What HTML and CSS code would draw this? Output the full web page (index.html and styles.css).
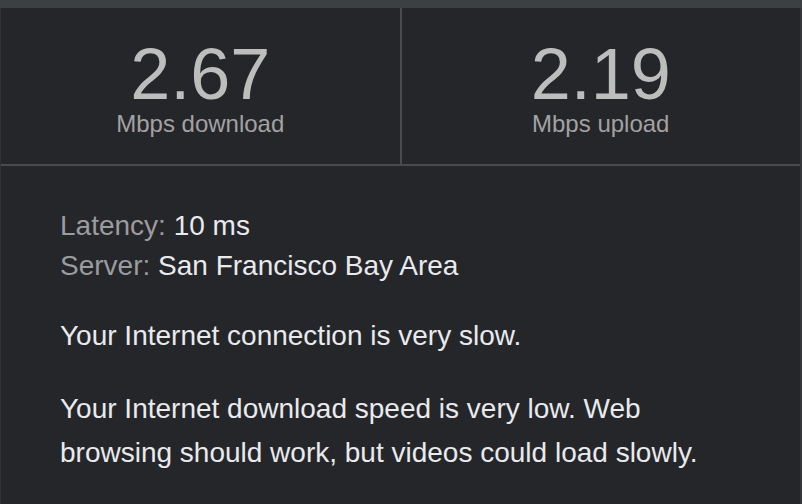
FILE: index.html
```html
<!DOCTYPE html>
<html>
    <head>
        <title>Speed test result</title>
        <meta charset="UTF-8">
        <meta name="viewport" content="width=device-width, initial-scale=1.0">
        <link rel="stylesheet" href="styles.css">
    </head>
    <body>
        <div class="topBar"></div>
        <div class="panel">
            <div class="stats">
                <div class="stat">
                    <div class="statValue">2.67</div>
                    <div class="statUnit">Mbps download</div>
                </div>
                <div class="stat">
                    <div class="statValue">2.19</div>
                    <div class="statUnit">Mbps upload</div>
                </div>
            </div>

            <div class="details">
                <div class="info">
                    <div><span class="infoLabel">Latency:</span> 10 ms</div>
                    <div><span class="infoLabel">Server:</span> San Francisco Bay Area</div>
                </div>
                <p class="message">Your Internet connection is very slow.</p>
                <p class="message">Your Internet download speed is very low. Web browsing should work, but videos could load slowly.</p>
            </div>
        </div>
    </body>
</html>
```

FILE: styles.css
```css
html, body {
    margin: 0;
    padding: 0;
}

body {
    width: 802px;
    height: 504px;
    overflow: hidden;
    background: #252629;
    font-family: "Liberation Sans", Arial, Helvetica, sans-serif;
    color: #e8eaed;
}

.topBar {
    height: 8px;
    background: #3c4043;
}

.panel {
    height: 496px;
    border-left: 1px solid #303134;
    border-right: 2px solid #35363a;
    box-sizing: border-box;
}

/* speed numbers */
.stats {
    display: flex;
    border-bottom: 2px solid #4a4b4e;
}

.stat {
    flex: 1;
    padding: 28px 0;
    text-align: center;
}

.stat:first-child {
    border-right: 2px solid #4a4b4e;
}

.statValue {
    font-size: 72px;
    line-height: 76px;
    color: #bdbdbd;
}

.statUnit {
    font-size: 24px;
    line-height: 24px;
    color: #a2a2a2;
}

/* latency, server and messages */
.details {
    padding: 40px 50px 0 59px;
    font-size: 28px;
}

.info {
    line-height: 40px;
}

.infoLabel {
    color: #9b9c9e;
}

.message {
    margin: 28px 0 0 0;
    line-height: 44.5px;
}
```
